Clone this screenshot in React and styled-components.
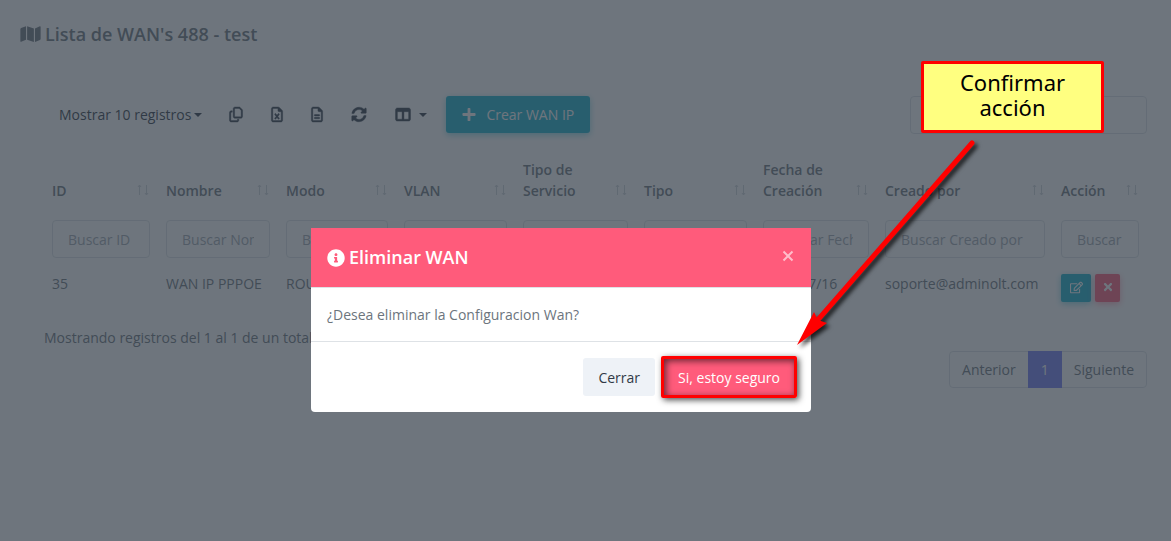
import React from 'react'
import styled, { createGlobalStyle } from 'styled-components'
import { FaInfoCircle, FaMap, FaPlus, FaRegEdit, FaSyncAlt, FaTimes } from 'react-icons/fa'
import { FaRegCopy, FaRegFileExcel, FaRegFileLines, FaTableColumns } from 'react-icons/fa6'

const GlobalStyle = createGlobalStyle`
  * {
    box-sizing: border-box;
  }

  body {
    margin: 0;
    background: #fff;
    color: #6c757d;
    font-family: 'Open Sans', sans-serif;
    font-size: 14px;
    line-height: 21px;
  }

  button, input {
    font: inherit;
    color: inherit;
  }

  button {
    cursor: pointer;
  }
`

const Page = styled.main`
  min-height: 100vh;
  padding: 20px 24px 20px 20px;
`

const Title = styled.h4`
  display: flex;
  align-items: center;
  gap: 4px;
  margin: 0;
  font-size: 18px;
  font-weight: 600;
  line-height: 28px;

  svg {
    width: 21px;
    height: 18px;
  }
`

const Content = styled.div`
  padding: 48px 0 0 24px;
`

const Toolbar = styled.div`
  display: flex;
  align-items: flex-start;
  justify-content: space-between;
`

const Tools = styled.div`
  display: flex;
  align-items: center;
`

const ToolButton = styled.button`
  display: flex;
  align-items: center;
  gap: 8px;
  height: 36px;
  padding: 0 14px;
  border: 0;
  background: none;
  color: #313a46;

  svg {
    width: ${props => props.$icon || 14}px;
    height: 15px;
    stroke: currentColor;
    stroke-width: 14px;
    overflow: visible;
  }
`

const LengthButton = styled(ToolButton)`
  gap: 3px;
  padding: 0 13px 0 15px;
`

const Caret = styled.span`
  border: 4px solid transparent;
  border-top-color: currentColor;
  border-bottom: 0;
`

const CreateButton = styled.button`
  display: flex;
  align-items: center;
  gap: 10px;
  height: 37px;
  margin-left: 5px;
  padding: 0 16px;
  border: 0;
  border-radius: 3px;
  background: #17b1cc;
  box-shadow: 0 2px 6px rgba(23, 177, 204, 0.5);
  color: #fff;

  svg {
    width: 14px;
    height: 15px;
  }
`

const Input = styled.input`
  display: block;
  width: 100%;
  height: 38px;
  padding: 0 15px;
  border: 1px solid #dee2e6;
  border-radius: 4px;
  background: transparent;

  &::placeholder {
    color: #a1a9b1;
    opacity: 1;
  }
`

const Search = styled(Input)`
  width: 237px;
`

const Table = styled.table`
  width: 100%;
  margin-top: 17px;
  border-collapse: collapse;
  table-layout: fixed;
`

const Th = styled.th`
  padding: 8px 8px 11px;
  font-weight: 600;
  text-align: left;
  vertical-align: bottom;
`

const HeadLabel = styled.div`
  display: flex;
  align-items: flex-end;
  justify-content: space-between;
`

const SortIcon = styled.svg`
  flex: none;
  width: 14px;
  height: 21px;
  fill: none;
  stroke: #d0d5da;
`

const Td = styled.td`
  padding: 8px;
  line-height: 20px;
  vertical-align: top;
  white-space: nowrap;
`

const Actions = styled.div`
  display: flex;
  gap: 4px;
`

const ActionButton = styled.button`
  display: flex;
  align-items: center;
  justify-content: center;
  width: ${props => (props.$danger ? 25 : 30)}px;
  height: 28px;
  padding: 0 0 2px;
  border: 0;
  border-radius: 2px;
  background: ${props => (props.$danger ? '#ff5b7b' : '#17b1cc')};
  box-shadow: 0 2px 6px ${props => (props.$danger ? 'rgba(255, 91, 123, 0.5)' : 'rgba(23, 177, 204, 0.5)')};
  color: #fff;
`

const TableFooter = styled.div`
  display: flex;
  justify-content: space-between;
  align-items: flex-start;
  padding-top: 17px;
  font-weight: 500;
`

const Pagination = styled.nav`
  display: flex;
  margin-top: 24px;
  border: 1px solid #dee2e6;
  border-radius: 4px;
  font-weight: 400;
`

const PageLink = styled.a`
  margin: ${props => (props.$active ? '-1px 0' : '0')};
  padding: ${props => (props.$active ? '8px 13px' : '7px 12px')};
  background: ${props => (props.$active ? '#727cf5' : 'none')};
  color: ${props => (props.$active ? '#fff' : 'inherit')};
  text-decoration: none;
`

const Backdrop = styled.div`
  position: fixed;
  inset: 0;
  display: flex;
  align-items: flex-start;
  justify-content: center;
  padding: 228px 49px 0 0;
  background: rgba(49, 58, 70, 0.7);
`

const Dialog = styled.section`
  width: 100%;
  max-width: 500px;
  border-radius: 0 0 4px 4px;
  background: #fff;
`

const DialogHeader = styled.header`
  display: flex;
  align-items: center;
  justify-content: space-between;
  padding: 16px;
  border-bottom: 1px solid #dee2e6;
  background: #ff5b7b;
  color: #fff;
`

const DialogTitle = styled(Title)`
  line-height: 27px;

  svg {
    width: 18px;
    height: 18px;
  }
`

const CloseButton = styled.button`
  display: flex;
  padding: 0;
  margin-bottom: 4px;
  border: 0;
  background: none;
  opacity: 0.6;
`

const DialogBody = styled.p`
  margin: 0;
  padding: 16px;
  border-bottom: 1px solid #dee2e6;
`

const DialogFooter = styled.footer`
  display: flex;
  justify-content: flex-end;
  gap: 8px;
  padding: 16px;
`

const DialogButton = styled.button`
  position: relative;
  height: 38px;
  padding: 0 15px;
  border: 0;
  border-radius: 3px;
  background: ${props => (props.$danger ? '#ff5b7b' : '#eef2f7')};
  color: ${props => (props.$danger ? '#fff' : '#313a46')};
`

const Highlight = styled.span`
  position: absolute;
  inset: -2px;
  border: 3px solid #f00;
  border-radius: 2px;
  box-shadow: 2px 2px 6px rgba(0, 0, 0, 0.7), inset 2px 2px 7px rgba(0, 0, 0, 0.6);
`

const Callout = styled.aside`
  position: fixed;
  top: 61px;
  right: 67px;
  width: 183px;
  padding: 6px 24px 10px;
  border: 3px solid #f00;
  border-radius: 2px;
  background: #ffff80;
  color: #000;
  font-family: 'Noto Sans', sans-serif;
  font-size: 22px;
  line-height: 25px;
  text-align: center;
`

const Arrow = styled.svg`
  position: fixed;
  top: 136px;
  right: 185px;
  width: 200px;
  height: 220px;
  filter: drop-shadow(3px 3px 2px rgba(0, 0, 0, 0.75));
  pointer-events: none;
`

const columns = [
  { label: 'ID', width: 114 },
  { label: 'Nombre', width: 120 },
  { label: 'Modo', width: 118 },
  { label: 'VLAN', width: 119 },
  { label: 'Tipo de Servicio', width: 121 },
  { label: 'Tipo', width: 119 },
  { label: 'Fecha de Creación', width: 122 },
  { label: 'Creado por', width: 176 },
  { label: 'Acción', width: 94 }
]

const wan = ['35', 'WAN IP PPPOE', 'ROUTER', '100', 'INTERNET', 'PPPOE', '2020/07/16', 'soporte@adminolt.com']

const exportTools = [
  { label: 'Copiar', icon: <FaRegCopy />, size: 14 },
  { label: 'Excel', icon: <FaRegFileExcel />, size: 12 },
  { label: 'CSV', icon: <FaRegFileLines />, size: 12 },
  { label: 'Recargar', icon: <FaSyncAlt />, size: 16 }
]

const WanTable = () => (
  <Table>
    <colgroup>
      {columns.map(column => (
        <col key={column.label} style={{ width: column.width }} />
      ))}
    </colgroup>
    <thead>
      <tr>
        {columns.map(column => (
          <Th key={column.label} scope='col'>
            <HeadLabel>
              {column.label}
              <SortIcon viewBox='0 0 14 21' aria-hidden='true'>
                <path d='M3.5 15V5M2 7l1.5-2L5 7M10.5 5v10M9 13l1.5 2 1.5-2' />
              </SortIcon>
            </HeadLabel>
          </Th>
        ))}
      </tr>
    </thead>
    <tbody>
      <tr>
        {columns.map(column => (
          <Td key={column.label}>
            <Input placeholder={`Buscar ${column.label}`} aria-label={`Buscar ${column.label}`} />
          </Td>
        ))}
      </tr>
      <tr>
        {wan.map(value => (
          <Td key={value}>{value}</Td>
        ))}
        <Td>
          <Actions>
            <ActionButton aria-label='Editar'><FaRegEdit size={13} /></ActionButton>
            <ActionButton $danger aria-label='Eliminar'><FaTimes size={12} /></ActionButton>
          </Actions>
        </Td>
      </tr>
    </tbody>
  </Table>
)

const DeleteDialog = () => (
  <Backdrop>
    <Dialog role='dialog' aria-modal='true' aria-labelledby='dialog-title'>
      <DialogHeader>
        <DialogTitle id='dialog-title'><FaInfoCircle /> Eliminar WAN</DialogTitle>
        <CloseButton aria-label='Cerrar ventana'>
          <svg width='14' height='14' viewBox='0 0 14 14' stroke='currentColor' strokeWidth='2' aria-hidden='true'>
            <path d='M2.5 2.5l9 9M11.5 2.5l-9 9' />
          </svg>
        </CloseButton>
      </DialogHeader>
      <DialogBody>¿Desea eliminar la Configuracion Wan?</DialogBody>
      <DialogFooter>
        <DialogButton>Cerrar</DialogButton>
        <DialogButton $danger>
          Si, estoy seguro
          <Highlight />
        </DialogButton>
      </DialogFooter>
    </Dialog>
  </Backdrop>
)

const App = () => {
  return (
    <>
      <GlobalStyle />
      <Page>
        <Title><FaMap /> Lista de WAN's 488 - test</Title>
        <Content>
          <Toolbar>
            <Tools>
              <LengthButton>Mostrar 10 registros <Caret /></LengthButton>
              {exportTools.map(tool => (
                <ToolButton key={tool.label} $icon={tool.size} aria-label={tool.label}>{tool.icon}</ToolButton>
              ))}
              <ToolButton $icon={16} aria-label='Columnas'><FaTableColumns /><Caret /></ToolButton>
              <CreateButton><FaPlus /> Crear WAN IP</CreateButton>
            </Tools>
            <Search type='search' aria-label='Buscar' />
          </Toolbar>
          <WanTable />
          <TableFooter>
            <span>Mostrando registros del 1 al 1 de un total de 1 registros</span>
            <Pagination aria-label='Paginación'>
              <PageLink href='#anterior'>Anterior</PageLink>
              <PageLink href='#1' $active>1</PageLink>
              <PageLink href='#siguiente'>Siguiente</PageLink>
            </Pagination>
          </TableFooter>
        </Content>
      </Page>
      <DeleteDialog />
      <Callout>Confirmar acción</Callout>
      <Arrow viewBox='0 0 200 220' aria-hidden='true'>
        <path d='M186 7L30 186' stroke='#f00' strokeWidth='5' strokeLinecap='round' />
        <path d='M11 209L28 176L32 184L41 187Z' fill='#f00' />
      </Arrow>
    </>
  )
}

export default App
